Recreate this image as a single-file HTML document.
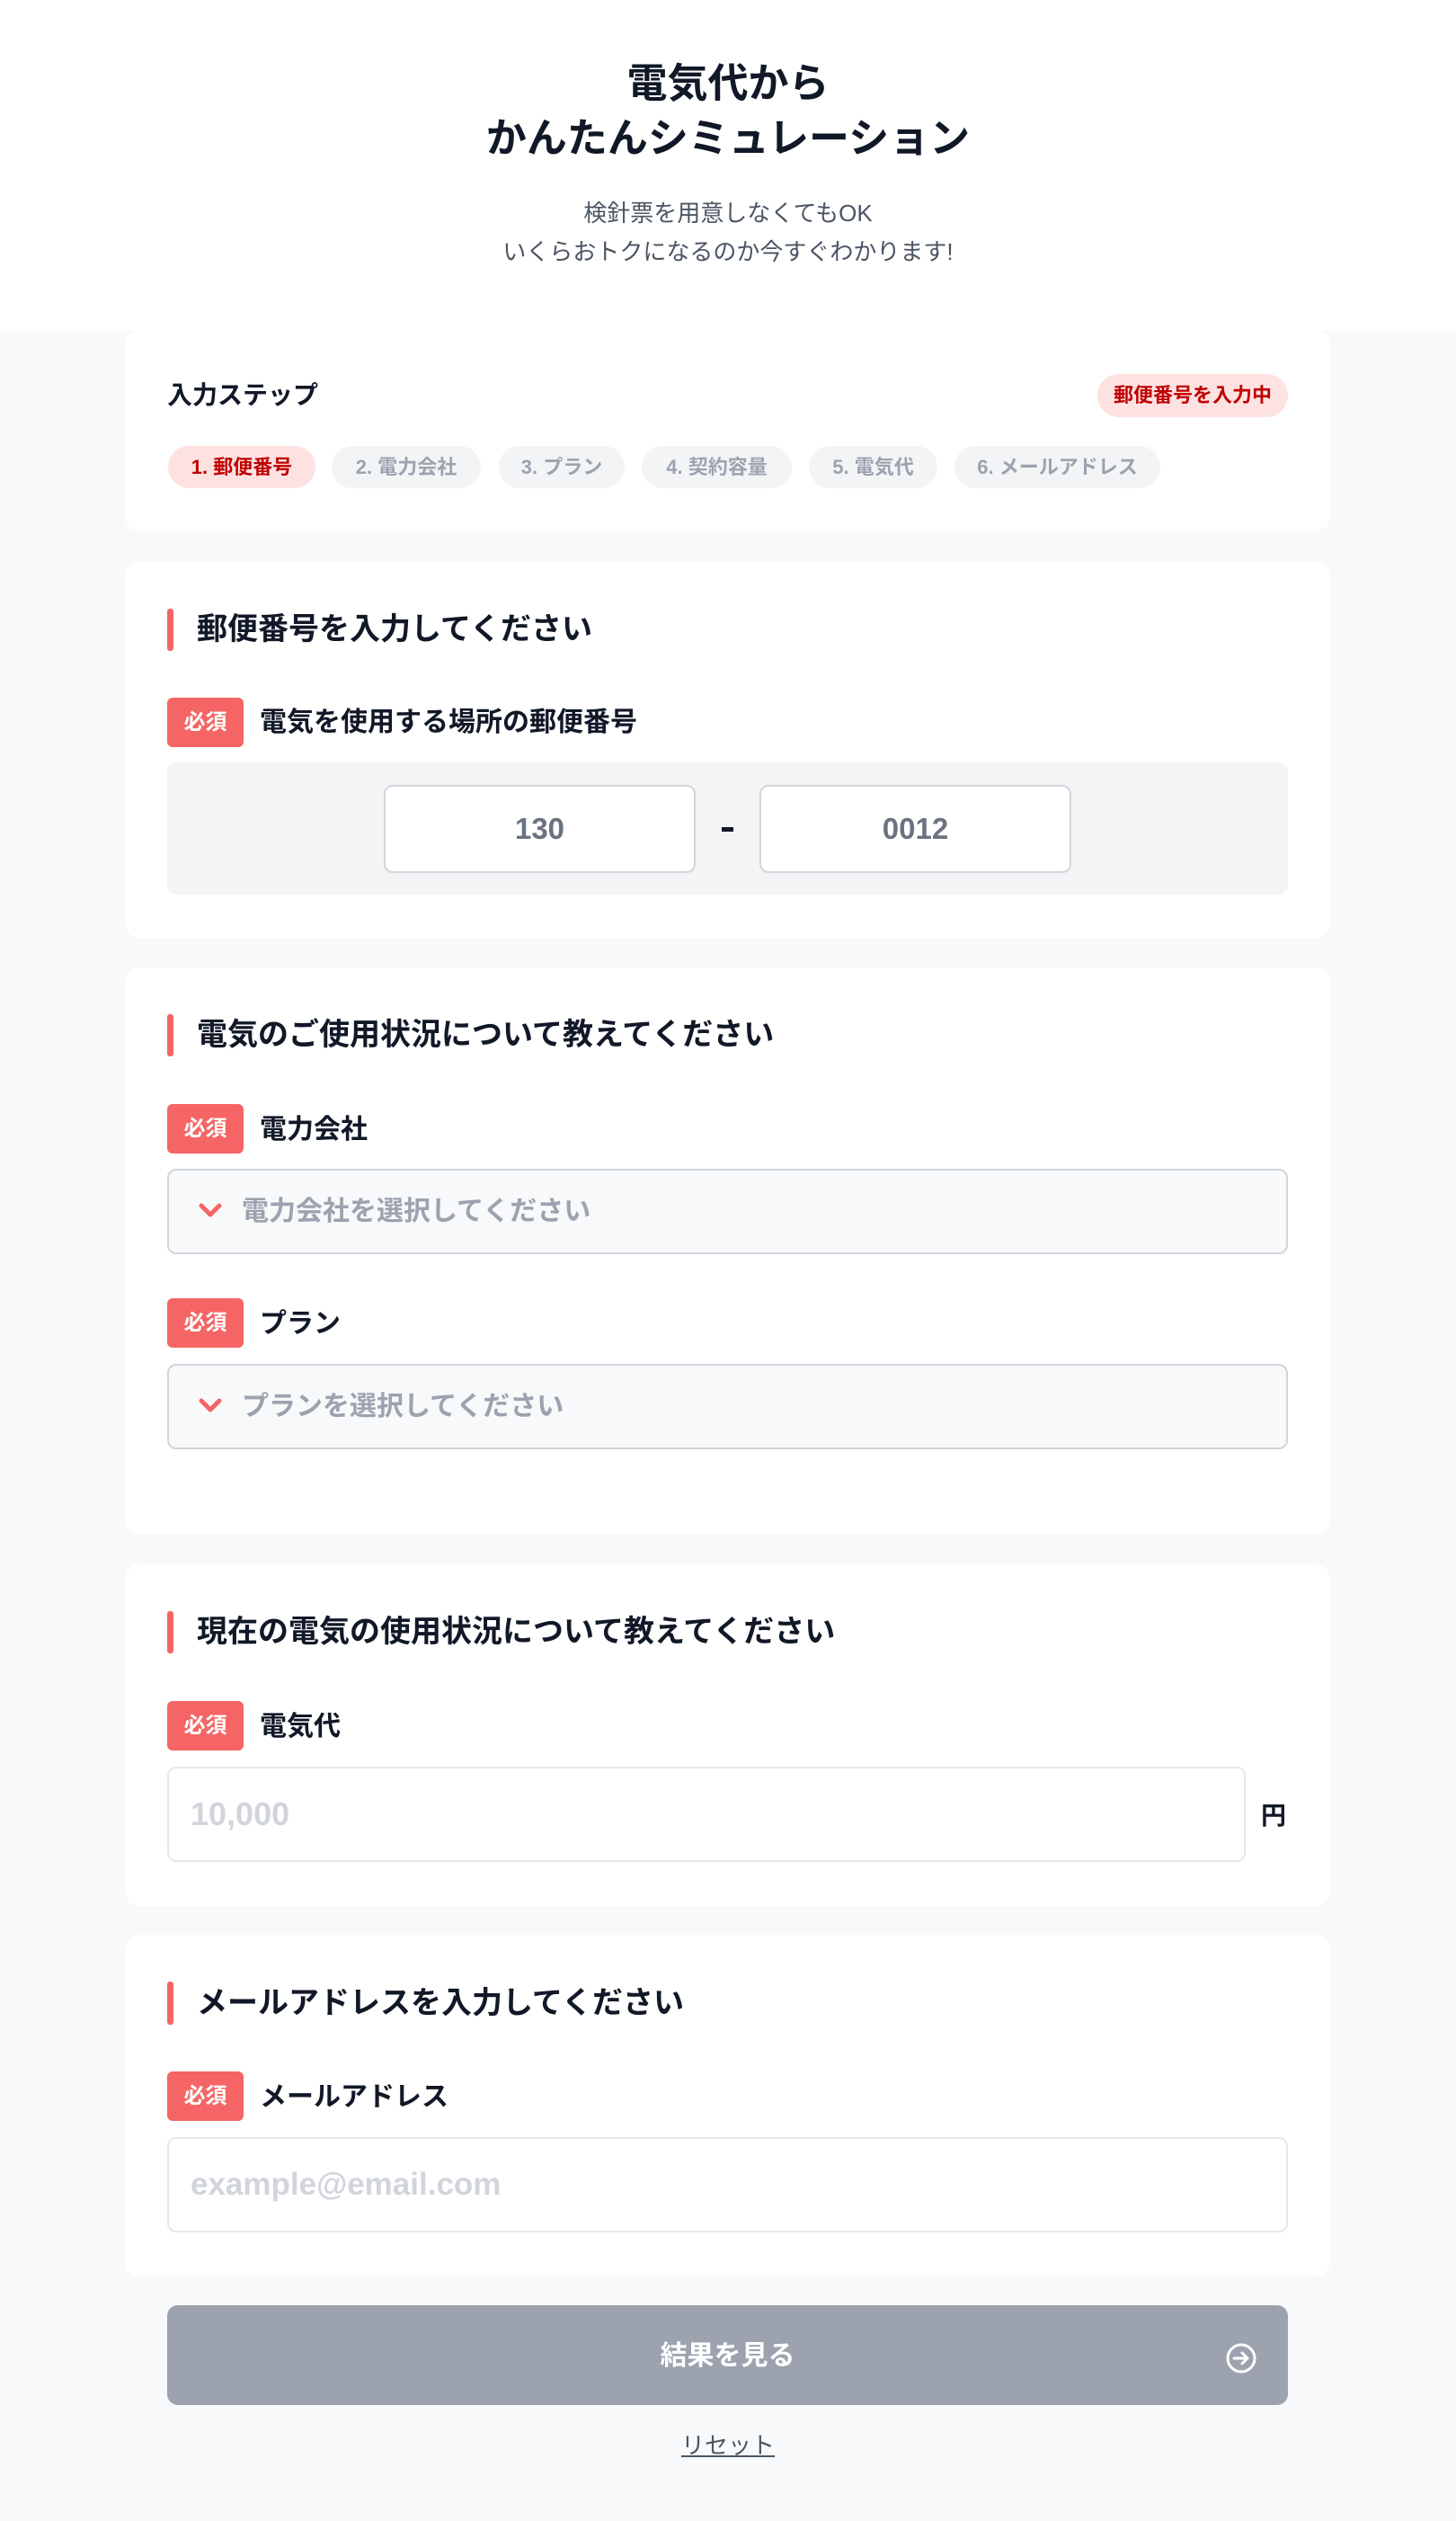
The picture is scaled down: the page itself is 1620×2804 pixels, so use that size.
<!DOCTYPE html>
<html><head><meta charset="utf-8"><style>
*{box-sizing:border-box;margin:0;padding:0}
body{width:1620px;height:2804px;background:#f8f9fa;font-family:"Liberation Sans","Noto Sans CJK JP",sans-serif;color:#111827;position:relative;overflow:hidden}
.abs{position:absolute}
.hdr{left:0;top:0;width:1620px;height:368px;background:#fff}
.card{background:#fff;border-radius:16px;left:139px;width:1341px}
.t{white-space:nowrap}
.bar{left:186px;width:7px;background:#f56565;border-radius:3px}
.h2{left:219px;font-size:34px;font-weight:bold;line-height:48px}
.req{left:186px;width:85px;height:55px;background:#f56565;color:#fff;border-radius:6px;font-size:24px;font-weight:bold;text-align:center;line-height:55px}
.lbl{left:289px;font-size:30px;font-weight:bold;line-height:40px}
.pill{top:496px;height:47px;border-radius:24px;background:#f3f4f6;color:#9ca3af;font-size:22px;font-weight:bold;line-height:47px;text-align:center}
.sel{left:186px;width:1247px;background:#f8f9fa;border:2px solid #d1d5db;border-radius:10px}
.ph{font-size:30px;color:#9ca3af;font-weight:bold}
.inp{background:#fff;border:2px solid #e5e7eb;border-radius:10px}
</style></head><body>
<div class="abs hdr"></div>
<div class="abs t" style="left:0;width:1620px;top:62px;text-align:center;font-size:45px;font-weight:bold;line-height:61px">電気代から<br>かんたんシミュレーション</div>
<div class="abs t" style="left:0;width:1620px;top:216px;text-align:center;font-size:26px;line-height:43px;color:#4b5563">検針票を用意しなくてもOK<br>いくらおトクになるのか今すぐわかります!</div>

<div class="abs card" style="top:367px;height:224px"></div>
<div class="abs t" style="left:186px;top:422px;font-size:28px;font-weight:bold;line-height:36px">入力ステップ</div>
<div class="abs t" style="left:1221px;top:416px;width:212px;height:48px;border-radius:24px;background:#fee2e2;color:#c00000;font-size:22px;font-weight:bold;text-align:center;line-height:48px">郵便番号を入力中</div>
<div class="abs pill t" style="left:187px;width:164px;background:#fee2e2;color:#c00000">1. 郵便番号</div>
<div class="abs pill t" style="left:369px;width:166px">2. 電力会社</div>
<div class="abs pill t" style="left:555px;width:140px">3. プラン</div>
<div class="abs pill t" style="left:714px;width:167px">4. 契約容量</div>
<div class="abs pill t" style="left:900px;width:143px">5. 電気代</div>
<div class="abs pill t" style="left:1062px;width:229px">6. メールアドレス</div>

<div class="abs card" style="top:625px;height:418px"></div>
<div class="abs bar" style="top:677px;height:47px"></div>
<div class="abs h2 t" style="top:676px">郵便番号を入力してください</div>
<div class="abs req" style="top:776px">必須</div>
<div class="abs lbl t" style="top:784px">電気を使用する場所の郵便番号</div>
<div class="abs" style="left:186px;top:848px;width:1247px;height:147px;background:#f3f4f6;border-radius:10px"></div>
<div class="abs inp" style="left:427px;top:873px;width:347px;height:98px;border-color:#d1d5db;text-align:center;line-height:94px;font-size:33px;color:#6b7280;font-weight:bold">130</div>
<div class="abs" style="left:803px;top:920px;width:13px;height:5px;background:#111827"></div>
<div class="abs inp" style="left:845px;top:873px;width:347px;height:98px;border-color:#d1d5db;text-align:center;line-height:94px;font-size:33px;color:#6b7280;font-weight:bold">0012</div>

<div class="abs card" style="top:1076px;height:630px"></div>
<div class="abs bar" style="top:1128px;height:47px"></div>
<div class="abs h2 t" style="top:1127px">電気のご使用状況について教えてください</div>
<div class="abs req" style="top:1228px">必須</div>
<div class="abs lbl t" style="top:1237px">電力会社</div>
<div class="abs sel" style="top:1300px;height:95px"></div>
<svg class="abs" style="left:220px;top:1337px" width="28" height="20" viewBox="0 0 28 20"><path d="M4 4 L14 14 L24 4" stroke="#f56565" stroke-width="5" fill="none" stroke-linecap="round" stroke-linejoin="round"/></svg>
<div class="abs ph t" style="left:269px;top:1328px;line-height:40px">電力会社を選択してください</div>
<div class="abs req" style="top:1444px">必須</div>
<div class="abs lbl t" style="top:1453px">プラン</div>
<div class="abs sel" style="top:1517px;height:95px"></div>
<svg class="abs" style="left:220px;top:1554px" width="28" height="20" viewBox="0 0 28 20"><path d="M4 4 L14 14 L24 4" stroke="#f56565" stroke-width="5" fill="none" stroke-linecap="round" stroke-linejoin="round"/></svg>
<div class="abs ph t" style="left:269px;top:1545px;line-height:40px">プランを選択してください</div>

<div class="abs card" style="top:1740px;height:380px"></div>
<div class="abs bar" style="top:1792px;height:47px"></div>
<div class="abs h2 t" style="top:1791px">現在の電気の使用状況について教えてください</div>
<div class="abs req" style="top:1892px">必須</div>
<div class="abs lbl t" style="top:1901px">電気代</div>
<div class="abs inp" style="left:186px;top:1965px;width:1200px;height:106px"></div>
<div class="abs t" style="left:212px;top:1998px;font-size:36px;color:#d1d5db;line-height:40px;font-weight:bold">10,000</div>
<div class="abs t" style="left:1403px;top:2003px;font-size:28px;font-weight:bold;line-height:34px">円</div>

<div class="abs card" style="top:2152px;height:380px"></div>
<div class="abs bar" style="top:2204px;height:48px"></div>
<div class="abs h2 t" style="top:2204px">メールアドレスを入力してください</div>
<div class="abs req" style="top:2304px">必須</div>
<div class="abs lbl t" style="top:2313px">メールアドレス</div>
<div class="abs inp" style="left:186px;top:2377px;width:1247px;height:106px"></div>
<div class="abs t" style="left:212px;top:2410px;font-size:35px;color:#d1d5db;line-height:40px;font-weight:bold">example@email.com</div>

<div class="abs" style="left:186px;top:2564px;width:1247px;height:111px;background:#9ca3af;border-radius:12px"></div>
<div class="abs t" style="left:186px;width:1247px;top:2601px;text-align:center;color:#fff;font-size:30px;font-weight:bold;line-height:40px">結果を見る</div>
<svg class="abs" style="left:1363px;top:2605px" width="36" height="36" viewBox="0 0 36 36"><circle cx="18" cy="18" r="15" stroke="#fff" stroke-width="3" fill="none"/><path d="M10 18 H25 M19 12 L25 18 L19 24" stroke="#fff" stroke-width="3" fill="none" stroke-linecap="round" stroke-linejoin="round"/></svg>
<div class="abs t" style="left:0;width:1620px;top:2702px;text-align:center;font-size:26px;color:#4b5563;line-height:36px"><span style="text-decoration:underline">リセット</span></div>
</body></html>
